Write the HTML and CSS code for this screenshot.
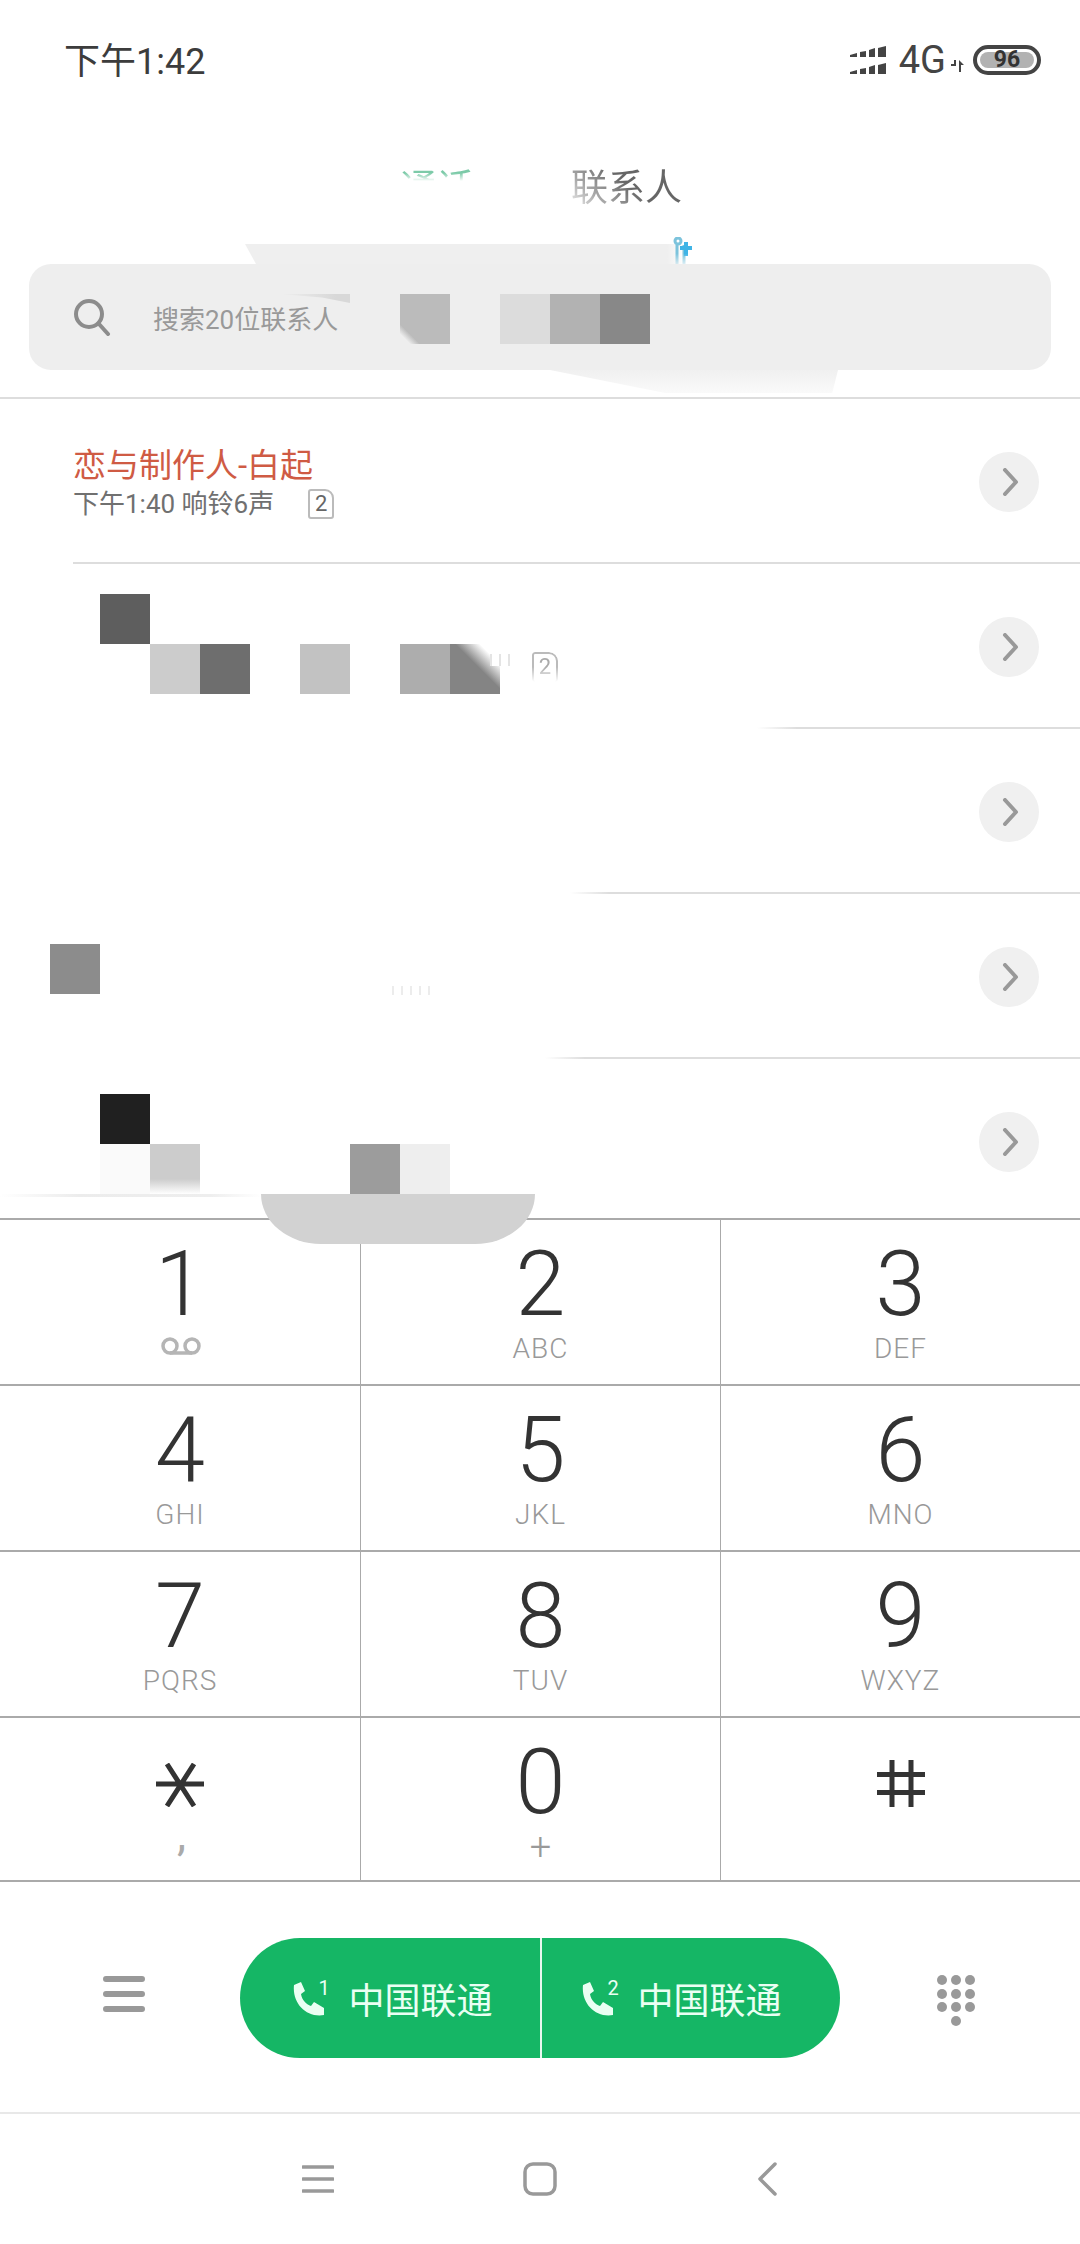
FILE: index.html
```html
<!DOCTYPE html>
<html lang="zh-CN">
<head>
    <meta charset="UTF-8">
    <meta name="viewport" content="width=device-width, initial-scale=1.0">
    <title>拨号</title>
    <link rel="stylesheet" href="styles.css">
</head>
<body>
    <div class="phone">
        <div class="status-bar">
            <span class="clock">下午1:42</span>
            <div class="status-icons">
                <svg class="signal" width="37" height="29" viewBox="0 0 37 29">
                    <path d="M0 9l7-2v4H0zM10 6l6-1v6h-6zM19 4l6-2v9h-6zM28 2l8-2v11h-8zM0 26l7-2v4H0zM10 23l6-1v6h-6zM19 21l6-2v9h-6zM28 19l8-2v11h-8z"/>
                </svg>
                <span class="net">4G</span>
                <svg class="arrows" width="14" height="12" viewBox="0 0 14 12">
                    <path d="M0 6h5V0h-2v4H0zM8 12V0l5 5h-3v7z" />
                </svg>
                <div class="battery"><span class="battery-level">96</span></div>
            </div>
        </div>

        <div class="tabs">
            <span class="tab tab-calls">通话</span>
            <span class="tab tab-contacts">联系人</span>
        </div>

        <div class="search-wrap">
            <div class="search-smear-top"></div>
            <svg class="search-smear-blue" width="20" height="28" viewBox="0 0 20 28">
                <circle cx="5" cy="4" r="3"/>
                <path class="blue-stem" d="M4 8v20M11 8v20"/>
                <path class="blue-cross" d="M13 5v14M7 11h12"/>
            </svg>
            <div class="search-smear-bottom"></div>
            <div class="search">
                <svg class="search-icon" width="38" height="38" viewBox="0 0 38 38">
                    <circle cx="16" cy="16" r="13"/>
                    <path d="M26 26l9 10"/>
                </svg>
                <span class="search-text">搜索20位联系人</span>
                <div class="search-shadow"></div>
                <div class="mosaic mosaic-search">
                    <i class="shade-bb corner-bl"></i><i></i><i class="shade-dd"></i><i class="shade-b2"></i><i class="shade-88"></i>
                </div>
            </div>
        </div>

        <div class="call-list">
            <div class="call-row row-first">
                <div class="call-info">
                    <div class="call-name">恋与制作人-白起</div>
                    <div class="call-meta">下午1:40 响铃6声 <span class="sim-badge">2</span></div>
                </div>
                <div class="call-more"><svg width="18" height="28" viewBox="0 0 18 28"><path d="M3 2l11 12L3 26"/></svg></div>
            </div>
            <div class="call-row row-second">
                <div class="mosaic mosaic-row2">
                    <i class="shade-5e"></i><i></i><i></i><i></i><i></i><i></i><i></i><i></i>
                    <i></i><i class="shade-cc"></i><i class="shade-6e"></i><i></i><i class="shade-c2"></i><i></i><i class="shade-ad"></i><i class="shade-84 corner-tr"></i>
                </div>
                <div class="residue residue-row2"></div>
                <span class="sim-badge sim-faded">2</span>
                <div class="call-more"><svg width="18" height="28" viewBox="0 0 18 28"><path d="M3 2l11 12L3 26"/></svg></div>
            </div>
            <div class="call-row row-third">
                <div class="call-more"><svg width="18" height="28" viewBox="0 0 18 28"><path d="M3 2l11 12L3 26"/></svg></div>
            </div>
            <div class="call-row row-fourth">
                <div class="mosaic mosaic-row4"><i class="shade-8c"></i></div>
                <div class="residue residue-row4"></div>
                <div class="call-more"><svg width="18" height="28" viewBox="0 0 18 28"><path d="M3 2l11 12L3 26"/></svg></div>
            </div>
            <div class="call-row row-last">
                <div class="mosaic mosaic-row5">
                    <i class="shade-20"></i><i></i><i></i><i></i><i></i><i></i><i></i>
                    <i class="shade-fa"></i><i class="shade-cc fade-bottom"></i><i></i><i></i><i></i><i class="shade-9c"></i><i class="shade-ee"></i>
                </div>
                <div class="call-more"><svg width="18" height="28" viewBox="0 0 18 28"><path d="M3 2l11 12L3 26"/></svg></div>
            </div>
            <div class="smear-line"></div>
            <div class="smear-bowl"></div>
        </div>

        <div class="keypad">
            <div class="key"><span class="digit">1</span>
                <svg class="voicemail" width="42" height="18" viewBox="0 0 42 18"><circle cx="10" cy="9" r="7"/><circle cx="32" cy="9" r="7"/><path d="M10 16h22"/></svg>
            </div>
            <div class="key"><span class="digit">2</span><span class="letters">ABC</span></div>
            <div class="key"><span class="digit">3</span><span class="letters">DEF</span></div>
            <div class="key"><span class="digit">4</span><span class="letters">GHI</span></div>
            <div class="key"><span class="digit">5</span><span class="letters">JKL</span></div>
            <div class="key"><span class="digit">6</span><span class="letters">MNO</span></div>
            <div class="key"><span class="digit">7</span><span class="letters">PQRS</span></div>
            <div class="key"><span class="digit">8</span><span class="letters">TUV</span></div>
            <div class="key"><span class="digit">9</span><span class="letters">WXYZ</span></div>
            <div class="key">
                <svg class="sym sym-star" width="48" height="44" viewBox="0 0 48 44"><path d="M0 21h48M11 1l27 42M38 1L11 43"/></svg>
                <span class="letters letters-comma">,</span>
            </div>
            <div class="key"><span class="digit">0</span><span class="letters letters-plus">+</span></div>
            <div class="key">
                <svg class="sym sym-hash" width="48" height="47" viewBox="0 0 48 47"><path d="M15 0v47M34 0v47M0 14.5h48M0 32.5h48"/></svg>
            </div>
        </div>

        <div class="action-bar">
            <svg class="menu-icon" width="42" height="36" viewBox="0 0 42 36"><path d="M3 3h36M3 18h36M3 33h36"/></svg>
            <div class="call-buttons">
                <div class="call-btn">
                    <svg class="phone-icon" width="34" height="35" viewBox="0 0 34 35"><path d="M1 4l7-3 4 9-4 3c1 6 5 10 10 12l3-4 10 6v7c-18 3-32-12-30-30z"/></svg>
                    <span class="sim-no">1</span>
                    <span>中国联通</span>
                </div>
                <div class="call-btn">
                    <svg class="phone-icon" width="34" height="35" viewBox="0 0 34 35"><path d="M1 4l7-3 4 9-4 3c1 6 5 10 10 12l3-4 10 6v7c-18 3-32-12-30-30z"/></svg>
                    <span class="sim-no">2</span>
                    <span>中国联通</span>
                </div>
            </div>
            <div class="dialpad-icon">
                <i></i><i></i><i></i><i></i><i></i><i></i><i></i><i></i><i></i><i class="dot-last"></i>
            </div>
        </div>

        <div class="nav-bar">
            <svg width="32" height="30" viewBox="0 0 32 30"><path d="M1 3h30M1 15h30M1 27h30"/></svg>
            <svg class="nav-home" width="34" height="34" viewBox="0 0 34 34"><rect x="2" y="2" width="30" height="30" rx="8"/></svg>
            <svg width="20" height="34" viewBox="0 0 20 34"><path d="M18 2L3 17l15 15"/></svg>
        </div>
    </div>
</body>
</html>
```

FILE: styles.css
```css
:root {
    --text-dark: #333;
    --line: #aaa;
    --grey-icon: #999;
    --green: #15b665;
}

* {
    box-sizing: border-box;
}

body {
    margin: 0;
    background: white;
    font-family: Roboto, "Noto Sans CJK SC", sans-serif;
    color: var(--text-dark);
}

.phone {
    width: 1080px;
    height: 2244px;
    display: flex;
    flex-direction: column;
    overflow: hidden;
}

/* status bar */
.status-bar {
    height: 120px;
    flex-shrink: 0;
    display: flex;
    align-items: center;
    justify-content: space-between;
    padding: 0 39px 0 64px;
}

.clock {
    margin-bottom: 5px;
    font-size: 36px;
    color: #3c3c3c;
}

.status-icons {
    display: flex;
    align-items: center;
    height: 30px;
}

.signal {
    fill: #444;
}

.net {
    margin-left: 12px;
    font-size: 38px;
    color: #444;
}

.arrows {
    fill: #444;
    margin: 12px 8px 0 5px;
}

.battery {
    width: 68px;
    height: 30px;
    border: 4px solid #444;
    border-radius: 15px;
    padding: 3px;
}

.battery-level {
    display: block;
    height: 16px;
    background: #b2b2b2;
    border-radius: 8px;
    font-size: 23px;
    font-weight: 700;
    line-height: 16px;
    text-align: center;
    color: #333;
}

/* tabs */
.tabs {
    height: 144px;
    flex-shrink: 0;
    display: flex;
    gap: 97px;
    padding: 49px 0 0 400px;
}

.tab {
    font-size: 37px;
    line-height: 40px;
    height: 40px;
    background-clip: text;
    -webkit-background-clip: text;
    color: transparent;
}

.tab-calls {
    background-image: linear-gradient(to bottom, #7ccaa8 10%, white 30%);
}

.tab-contacts {
    background-image: linear-gradient(40deg, #ddd 8%, #aaa 25%, #666 55%);
}

/* search */
.search-wrap {
    position: relative;
    height: 135px;
    flex-shrink: 0;
    padding: 0 29px;
    border-bottom: 2px solid #ddd;
}

.search {
    position: relative;
    height: 106px;
    background: #eee;
    border-radius: 22px;
    display: flex;
    align-items: center;
    padding-left: 44px;
}

.search-icon {
    fill: none;
    stroke: #8c8c8c;
    stroke-width: 4;
    stroke-linecap: round;
}

.search-text {
    margin-left: 42px;
    font-size: 26px;
    color: #999;
}

.search-shadow {
    position: absolute;
    left: 251px;
    top: 30px;
    width: 70px;
    height: 9px;
    background: linear-gradient(to right, #eee, #d8d8d8 80%);
    clip-path: polygon(0 0, 100% 0, 100% 100%, 60% 40%);
}

.search-smear-top {
    position: absolute;
    left: 245px;
    top: -20px;
    width: 440px;
    height: 20px;
    background: linear-gradient(to right, #efefef 96%, white);
    clip-path: polygon(0 0, 100% 0, 100% 100%, 2.5% 100%);
}

.search-smear-blue {
    position: absolute;
    left: 673px;
    top: -27px;
    fill: none;
    stroke-width: 3;
    -webkit-mask-image: linear-gradient(to bottom, black 60%, rgba(0, 0, 0, 0.2));
    mask-image: linear-gradient(to bottom, black 60%, rgba(0, 0, 0, 0.2));
}

.search-smear-blue circle,
.blue-stem {
    stroke: #7cc3dc;
}

.blue-cross {
    stroke: #3fb4e6;
    stroke-width: 4;
}

.search-smear-bottom {
    position: absolute;
    left: 550px;
    top: 106px;
    width: 288px;
    height: 23px;
    background: linear-gradient(to bottom, #f0f0f0, #fafafa);
    clip-path: polygon(0 0, 100% 0, 98% 100%, 40% 100%);
}

.mosaic {
    display: grid;
    grid-auto-rows: 50px;
    grid-template-columns: repeat(8, 50px);
}

.mosaic i {
    display: block;
}

.mosaic-search {
    margin-left: 62px;
    margin-top: 4px;
    grid-template-columns: repeat(5, 50px);
}

.mosaic-row2 {
    margin-top: -5px;
}

.mosaic-row4 {
    margin-top: -15px;
    grid-template-columns: 50px;
}

.mosaic-row5 {
    align-self: flex-start;
    margin-top: 35px;
    grid-template-columns: repeat(7, 50px);
}

.shade-bb { background: #bbb; }
.shade-dd { background: #dcdcdc; }
.shade-b2 { background: #b2b2b2; }
.shade-88 { background: #888; }
.shade-5e { background: #5e5e5e; }
.shade-cc { background: #ccc; }
.shade-6e { background: #6e6e6e; }
.shade-c2 { background: #c2c2c2; }
.shade-ad { background: #adadad; }
.shade-84 { background: #848484; }
.shade-8c { background: #8c8c8c; }
.shade-20 { background: #202020; }
.shade-fa { background: #fafafa; }
.shade-9c { background: #9c9c9c; }
.shade-ee { background: #eee; }

.corner-bl {
    background: linear-gradient(45deg, #eee 10%, #bbb 20%);
}

.corner-tr {
    background: linear-gradient(45deg, #848484 55%, white 80%);
}

.fade-bottom {
    background: linear-gradient(to bottom, #ccc 70%, white);
}

/* call log */
.call-list {
    position: relative;
    height: 819px;
    flex-shrink: 0;
}

.call-row {
    position: relative;
    height: 165px;
    display: flex;
    align-items: center;
}

.call-row::after {
    content: "";
    position: absolute;
    right: 0;
    bottom: 0;
    height: 2px;
    background: linear-gradient(to right, white, #ddd 40px);
}

.row-first {
    padding-left: 73px;
}

.row-first::after {
    left: 73px;
    background: #ddd;
}

.row-second {
    padding-left: 100px;
}

.row-second::after {
    left: 757px;
}

.row-third::after {
    left: 570px;
}

.row-fourth {
    padding-left: 50px;
}

.row-fourth::after {
    left: 545px;
}

.row-last {
    padding-left: 100px;
    height: 159px;
}

.row-last::after {
    display: none;
}

.call-info {
    flex: 1;
    padding-top: 4px;
}

.call-name {
    font-size: 33px;
    line-height: 40px;
    color: #cf5b44;
}

.call-meta {
    display: flex;
    align-items: center;
    font-size: 26px;
    line-height: 36px;
    color: #707070;
}

.sim-badge {
    display: inline-block;
    width: 26px;
    height: 30px;
    margin-left: 34px;
    border: 2px solid #bbb;
    border-radius: 3px 9px 3px 3px;
    font-size: 22px;
    line-height: 26px;
    text-align: center;
    color: #666;
}

.sim-faded {
    position: absolute;
    left: 532px;
    top: 88px;
    margin: 0;
    border-bottom: 0;
    color: #aaa;
    -webkit-mask-image: linear-gradient(to bottom, black 50%, transparent);
    mask-image: linear-gradient(to bottom, black 50%, transparent);
}

/* leftovers of the masked text */
.residue {
    position: absolute;
    background: repeating-linear-gradient(to right, #e4e4e4 0 2px, white 2px 9px);
}

.residue-row2 {
    left: 490px;
    top: 90px;
    width: 20px;
    height: 12px;
}

.residue-row4 {
    left: 392px;
    top: 92px;
    width: 40px;
    height: 9px;
    opacity: 0.7;
}

.call-more {
    position: absolute;
    right: 41px;
    top: 53px;
    width: 60px;
    height: 60px;
    background: #f0f0f0;
    border-radius: 50%;
    display: flex;
    align-items: center;
    justify-content: center;
    padding-left: 4px;
}

.call-more svg {
    fill: none;
    stroke: #999;
    stroke-width: 4;
    stroke-linecap: round;
    stroke-linejoin: round;
}

.smear-line {
    position: absolute;
    left: 0;
    top: 795px;
    width: 262px;
    height: 3px;
    background: linear-gradient(to right, white, #ececec 30%, #eee 80%, white);
}

.smear-bowl {
    position: absolute;
    z-index: 1;
    left: 261px;
    top: 795px;
    width: 274px;
    height: 50px;
    background: #d2d2d2;
    border-radius: 0 0 60px 60px / 0 0 50px 50px;
}

/* keypad */
.keypad {
    height: 664px;
    flex-shrink: 0;
    display: grid;
    grid-template-columns: 361px 360px 359px;
    grid-template-rows: 166px 166px 166px 164px;
    border-top: 2px solid var(--line);
}

.key {
    display: flex;
    flex-direction: column;
    align-items: center;
    border-bottom: 2px solid var(--line);
    border-right: 1px solid var(--line);
    padding-top: 16px;
}

.key:nth-child(3n) {
    border-right: 0;
}

.digit {
    font-size: 90px;
    font-weight: 300;
    line-height: 98px;
    height: 98px;
}

.letters {
    font-size: 28px;
    font-weight: 300;
    line-height: 30px;
    letter-spacing: 1px;
    color: #999;
}

.letters-plus {
    font-size: 38px;
    letter-spacing: 0;
}

.letters-comma {
    margin-top: -8px;
    margin-left: 3px;
    font-size: 46px;
    font-weight: 400;
    letter-spacing: 0;
    color: #aaa;
}

.voicemail {
    margin-top: 3px;
    margin-left: 2px;
    fill: none;
    stroke: #b5b5b5;
    stroke-width: 3.5;
}

.sym {
    fill: none;
    stroke: #333;
    stroke-width: 5;
}

.sym-star {
    margin: 29px 0 20px;
}

.sym-hash {
    margin-top: 26px;
}

/* bottom action bar */
.action-bar {
    height: 232px;
    flex-shrink: 0;
    display: flex;
    align-items: center;
    padding: 2px 105px 0 103px;
    justify-content: space-between;
    border-bottom: 2px solid #e8e8e8;
}

.menu-icon {
    margin-bottom: 8px;
    fill: none;
    stroke: var(--grey-icon);
    stroke-width: 6;
    stroke-linecap: round;
}

.call-buttons {
    width: 600px;
    height: 120px;
    margin-right: 3px;
    display: flex;
    background: var(--green);
    border-radius: 60px;
    overflow: hidden;
}

.call-btn {
    flex: 0 0 50%;
    display: flex;
    align-items: center;
    padding-left: 53px;
    font-size: 36px;
    color: #eafff3;
}

.call-btn + .call-btn {
    border-left: 2px solid #e8f8ef;
    padding-left: 40px;
}

.phone-icon {
    fill: #eafff3;
}

.sim-no {
    width: 30px;
    margin-left: -8px;
    margin-bottom: 20px;
    font-size: 20px;
}

.dialpad-icon {
    display: grid;
    margin-top: 5px;
    grid-template-columns: repeat(3, 10px);
    gap: 3.5px 4px;
}

.dialpad-icon i {
    width: 10px;
    height: 10px;
    border-radius: 50%;
    background: var(--grey-icon);
}

.dot-last {
    grid-column: 2;
}

/* nav bar */
.nav-bar {
    flex: 1;
    display: flex;
    align-items: center;
    padding-left: 302px;
}

.nav-bar svg {
    fill: none;
    stroke: var(--grey-icon);
    stroke-width: 3.5;
    stroke-linecap: round;
    stroke-linejoin: round;
}

.nav-home {
    margin: 0 200px 0 189px;
}
```
